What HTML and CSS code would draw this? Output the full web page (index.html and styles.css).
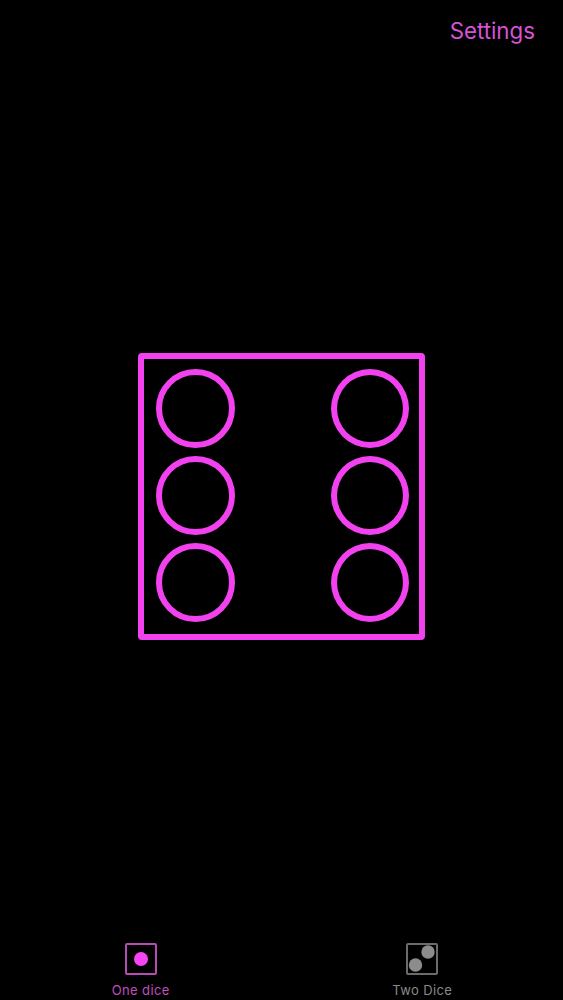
FILE: index.html
```html
<!DOCTYPE html>
<html lang="en">
<head>
  <meta charset="UTF-8" />
  <meta name="viewport" content="width=device-width, initial-scale=1.0"/>
  <title>Dice</title>
  <link rel="stylesheet" href="styles.css">
</head>
<body>
  <div class="app">
    <div class="top-bar">
      <a class="settings-link">Settings</a>
    </div>

    <div class="dice-area">
      <div class="dice">
        <div class="pip"></div>
        <div class="pip"></div>
        <div class="pip"></div>
        <div class="pip"></div>
        <div class="pip"></div>
        <div class="pip"></div>
      </div>
    </div>

    <div class="tab-bar">
      <div class="tab tab-active">
        <svg class="tab-icon" width="32" height="32" viewBox="0 0 32 32">
          <rect x="1" y="1" width="30" height="30" rx="1" fill="none" stroke="#b54cb4" stroke-width="2"/>
          <circle cx="16" cy="16" r="7" fill="#f545f2"/>
        </svg>
        <span class="tab-label">One dice</span>
      </div>
      <div class="tab">
        <svg class="tab-icon" width="32" height="32" viewBox="0 0 32 32">
          <rect x="1" y="1" width="30" height="30" rx="1" fill="none" stroke="#6b6b6b" stroke-width="2"/>
          <circle cx="22" cy="9" r="6.700" fill="#8c8c8c"/>
          <circle cx="9.500" cy="22" r="6.700" fill="#8c8c8c"/>
        </svg>
        <span class="tab-label">Two Dice</span>
      </div>
    </div>
  </div>
</body>
</html>
```

FILE: styles.css
```css
body {
  margin: 0;
  background: #000;
  font-family: Inter, 'Liberation Sans', sans-serif;
}
.app {
  display: flex;
  flex-direction: column;
  height: 1000px;
  overflow: hidden;
}
.top-bar {
  display: flex;
  justify-content: flex-end;
  height: 58px;
  padding: 16px 28px 0 0;
  box-sizing: border-box;
}
.settings-link {
  font-size: 22.3px;
  line-height: 30px;
  color: #d653d6;
}
.dice-area {
  flex: 1;
  display: flex;
  justify-content: center;
  align-items: center;
}
.dice {
  width: 287px;
  height: 287px;
  box-sizing: border-box;
  border: 6px solid #f242f0;
  border-radius: 4px;
  padding: 10px 10px 12px 12px;
  display: grid;
  grid-template-columns: 79px 78px;
  grid-template-rows: repeat(3, 79px);
  justify-content: space-between;
  align-content: space-between;
  grid-auto-flow: column;
}
.pip {
  box-sizing: border-box;
  border: 6px solid #f242f0;
  border-radius: 50%;
}
.tab-bar {
  display: flex;
  height: 65px;
  padding-top: 8px;
  box-sizing: border-box;
}
.tab {
  flex: 1;
  display: flex;
  flex-direction: column;
  align-items: center;
  color: #8a8a8a;
}
.tab-active {
  color: #c04fbf;
}
.tab-icon {
  display: block;
}
.tab-label {
  margin-top: 7px;
  font-size: 13px;
  line-height: 17px;
  letter-spacing: 0.4px;
  white-space: nowrap;
}
```
